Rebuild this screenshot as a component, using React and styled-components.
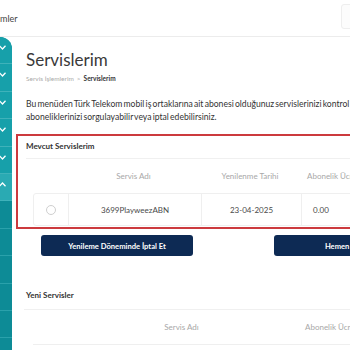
import React from "react";
import styled, { createGlobalStyle } from "styled-components";

const GlobalStyle = createGlobalStyle`
  html, body {
    margin: 0;
    padding: 0;
    overflow: hidden;
    background: #ffffff;
  }
  body {
    font-family: Lato, "Open Sans", sans-serif;
    color: #333333;
  }
`;

const Page = styled.div`
  width: 520px;
  height: 350px;
  overflow: hidden;
  background: #ffffff;
`;

const TopBar = styled.div`
  height: 36px;
  border-bottom: 1px solid #ececec;
  display: flex;
  align-items: center;
  justify-content: space-between;
  box-sizing: content-box;
`;

const TopTitle = styled.div`
  font-size: 9px;
  color: #444;
  padding-top: 1px;
`;

const TopBox = styled.div`
  width: 40px;
  height: 23px;
  margin-right: 137px;
  margin-bottom: 3px;
  border: 1px solid #eeeeee;
  border-radius: 3px;
  background: #fcfcfc;
`;

const Body = styled.div`
  display: flex;
`;

const Sidebar = styled.div`
  width: 12px;
  height: 313px;
  flex-shrink: 0;
  background: #0f8e99;
  border-top-right-radius: 12px;
  overflow: hidden;
  display: flex;
  flex-direction: column;
`;

const MenuItem = styled.div`
  height: 27.4px;
  flex-shrink: 0;
  box-sizing: border-box;
  background: ${(p) => (p.$sub ? "#0d8b96" : p.$open ? "#2aaab3" : "#17a0aa")};
  border-bottom: 1px solid ${(p) => (p.$sub ? "#2aa1ab" : "#3fb2ba")};
  padding-top: 8px;
  display: flex;
  align-items: flex-start;
`;

const Chevron = ({ up }) => (
  <svg width="7" height="5" viewBox="0 0 7 5" style={{ marginLeft: -1 }}>
    <path
      d={up ? "M0.5 4.2 L3.5 1 L6.5 4.2" : "M0.5 0.8 L3.5 4 L6.5 0.8"}
      fill="none"
      stroke="#ffffff"
      strokeWidth="1.3"
    />
  </svg>
);

const Main = styled.div`
  flex: 1;
  padding: 13px 0 0 4px;
`;

const Intro = styled.div`
  padding-left: 10px;
`;

const Title = styled.h1`
  margin: 0;
  font-size: 17px;
  line-height: 20px;
  font-weight: 400;
  color: #3a3a3a;
`;

const Crumbs = styled.div`
  margin-top: 4px;
  font-size: 6.5px;
  line-height: 10px;
  color: #aaaaaa;
  display: flex;
  align-items: center;
  gap: 3px;
`;

const CrumbCurrent = styled.span`
  color: #333333;
  font-weight: 700;
`;

const Paragraph = styled.p`
  margin: 14px 0 0 0;
  font-size: 8.6px;
  line-height: 13px;
  word-spacing: -1px;
  color: #333333;
  width: 400px;
`;

const RedBox = styled.div`
  margin-top: 10px;
  border: 2px solid #cc3a3e;
  padding: 5px 0 1px 8px;
  width: 470px;
`;

const SectionTitle = styled.div`
  font-size: 8px;
  line-height: 10px;
  font-weight: 700;
  color: #333333;
  padding-bottom: 7px;
  border-bottom: 1px solid #f0f0f0;
`;

const Grid = styled.div`
  display: grid;
  grid-template-columns: ${(p) => p.$cols};
  margin-left: 7px;
  font-size: 8px;
`;

const HeadRow = styled(Grid)`
  height: 34px;
  align-items: center;
  color: #a8a8a8;
`;

const HeadCell = styled.div`
  text-align: ${(p) => (p.$left ? "left" : "center")};
  padding-left: ${(p) => (p.$left ? "7px" : "0")};
  white-space: nowrap;
`;

const DataRow = styled(Grid)`
  height: 33px;
  box-sizing: border-box;
  border: 1px solid #efefef;
  border-radius: 3px;
  color: #4a4a4a;
`;

const DataCell = styled.div`
  display: flex;
  align-items: center;
  justify-content: ${(p) => (p.$left ? "flex-start" : "center")};
  padding-left: ${(p) => (p.$left ? "11px" : "0")};
  border-left: ${(p) => (p.$first ? "none" : "1px solid #efefef")};
  white-space: nowrap;
`;

const Radio = styled.span`
  width: 10px;
  height: 10px;
  border-radius: 50%;
  border: 1px solid #cfcfcf;
  box-sizing: border-box;
`;

const Actions = styled.div`
  display: flex;
  gap: 81px;
  margin: 6px 0 0 25px;
`;

const Button = styled.button`
  width: 152px;
  height: 21px;
  border: none;
  border-radius: 3px;
  background: #0d2a54;
  color: #ffffff;
  font-family: Lato, sans-serif;
  font-size: 7.6px;
  font-weight: 700;
  cursor: pointer;
  flex-shrink: 0;
`;

const NewSection = styled.div`
  margin-top: 34px;
  padding-left: 8px;
  width: 480px;
`;

const NewTitle = styled(SectionTitle)`
  padding: 0 0 9px 2px;
`;

const RowLine = styled.div`
  margin-left: 9px;
  border-top: 1px solid #efefef;
`;

const sidebarItems = [
  { open: false },
  { open: false },
  { open: false },
  { open: false },
  { open: false },
  { open: true },
  { sub: true },
  { sub: true },
  { sub: true },
  { sub: true },
  { sub: true },
  { sub: true },
];

const currentCols = "34px 133px 100px 1fr";

export default function App() {
  return (
    <Page>
      <GlobalStyle />
      <TopBar>
        <TopTitle>mler</TopTitle>
        <TopBox />
      </TopBar>
      <Body>
        <Sidebar>
          {sidebarItems.map((item, i) => (
            <MenuItem key={i} $open={item.open} $sub={item.sub}>
              {!item.sub && <Chevron up={item.open} />}
            </MenuItem>
          ))}
        </Sidebar>
        <Main>
          <Intro>
            <Title>Servislerim</Title>
            <Crumbs>
              <span>Servis İşlemlerim</span>
              <span>&gt;</span>
              <CrumbCurrent>Servislerim</CrumbCurrent>
            </Crumbs>
            <Paragraph>
              Bu menüden Türk Telekom mobil iş ortaklarına ait abonesi olduğunuz
              servislerinizi kontrol edebilir, aboneliklerinizi sorgulayabilir veya
              iptal edebilirsiniz.
            </Paragraph>
          </Intro>
          <RedBox>
            <SectionTitle>Mevcut Servislerim</SectionTitle>
            <HeadRow $cols={currentCols}>
              <HeadCell />
              <HeadCell>Servis Adı</HeadCell>
              <HeadCell>Yenilenme Tarihi</HeadCell>
              <HeadCell $left>Abonelik Ücreti</HeadCell>
            </HeadRow>
            <DataRow $cols={currentCols}>
              <DataCell $first>
                <Radio />
              </DataCell>
              <DataCell>3699PlayweezABN</DataCell>
              <DataCell>23-04-2025</DataCell>
              <DataCell $left>0.00</DataCell>
            </DataRow>
          </RedBox>
          <Actions>
            <Button>Yenileme Döneminde İptal Et</Button>
            <Button>Hemen İptal Et</Button>
          </Actions>
          <NewSection>
            <NewTitle>Yeni Servisler</NewTitle>
            <HeadRow $cols="34px 233px 1fr">
              <HeadCell />
              <HeadCell>Servis Adı</HeadCell>
              <HeadCell $left>Abonelik Ücreti</HeadCell>
            </HeadRow>
            <RowLine />
          </NewSection>
        </Main>
      </Body>
    </Page>
  );
}
